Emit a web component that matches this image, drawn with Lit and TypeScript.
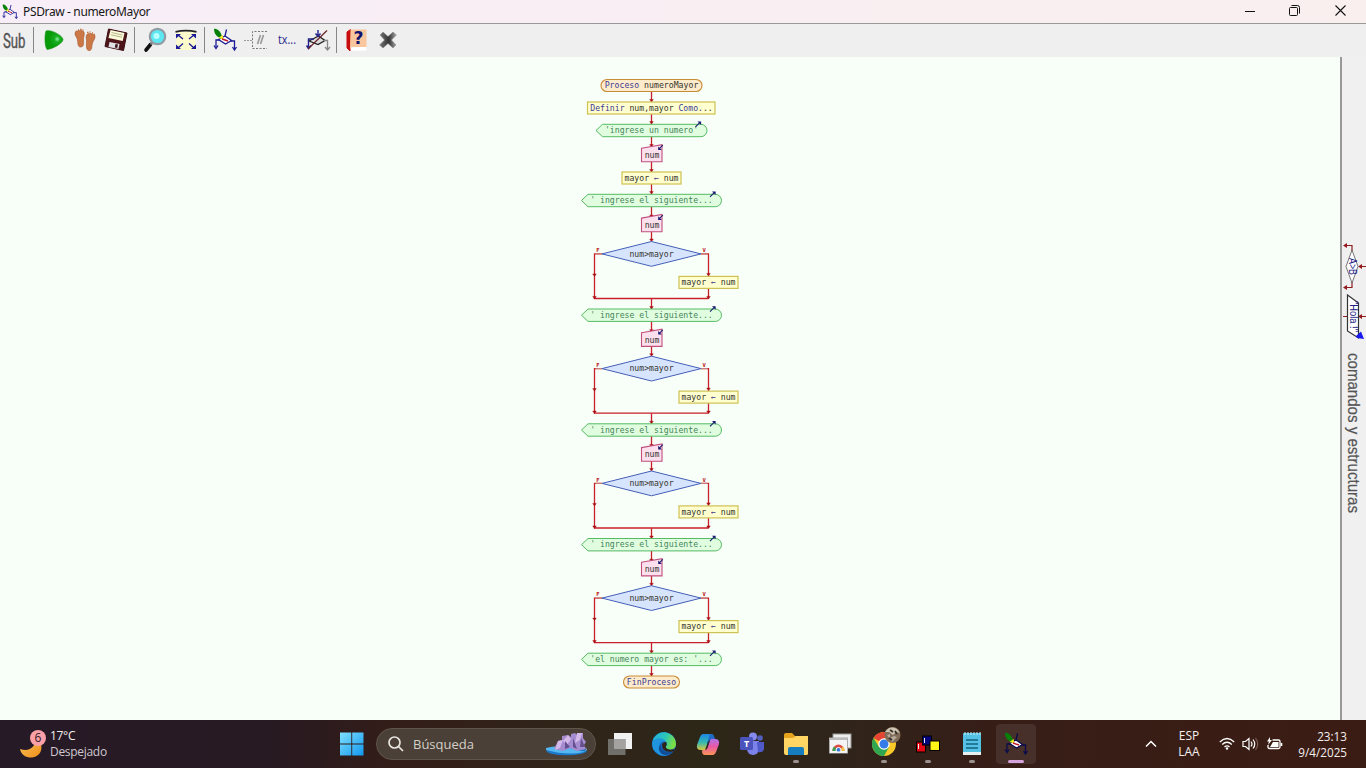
import { LitElement, html, svg, css } from "lit";
import { customElement } from "lit/decorators.js";

const CX = 651.5;

/* ---------- shared glyphs ---------- */

const logo = (size: number, dark = false) => html`<svg width=${size} height=${size} viewBox="0 0 24 24">
  <g fill="none" stroke=${dark ? "#0b0b4c" : "#1c1c96"} stroke-width="1.3">
    <path d="M13.500 1.500L12 8M8 12H3V19.500M17 13H21.500V21"/>
    <path d="M1 17.500L3 20.500L5 17.500M19.500 19L21.500 22L23.500 19"/>
    <path d="M5.500 11.500L12 8L18.500 12.500L12.500 16Z" fill="#fff"/>
  </g>
  <path d="M1 1C4 0 8.500 4 9 9.500C5.500 10.500 1 7 1 1Z" fill="#078007"/>
  <path d="M5.500 10L9.500 7L10.500 11.500Z" fill="#f2ee20"/>
  <path d="M9 11L15 13" stroke="#c2182a" stroke-width="1.400"/>
</svg>`;

/* ---------- flowchart pieces ---------- */

const label = (x: number, y: number, text: string, cls = "") =>
  svg`<text class="t ${cls}" x=${x} y=${y + 2.6} text-anchor="middle" textLength=${text.length * 4.9} lengthAdjust="spacingAndGlyphs" xml:space="preserve">${text}</text>`;

const arrow = (x: number, y1: number, y2: number) => svg`
  <path class="flow" d="M${x} ${y1}V${y2}"/>
  <path class="head" d="M${x - 1.8} ${y2 - 2.5}h3.600l-1.800 2.500z"/>`;

const terminal = (y: number, w: number, word: string, rest = "") => svg`
  <rect class="term" x=${CX - w / 2} y=${y - 6} width=${w} height="12" rx="6"/>
  <text class="t" x=${CX} y=${y + 2.6} text-anchor="middle" textLength=${(word + rest).length * 4.93} lengthAdjust="spacingAndGlyphs"><tspan class="kw">${word}</tspan>${rest}</text>`;

const output = (y: number, w: number, text: string) => {
  const l = CX - w / 2, r = CX + w / 2;
  return svg`
    <path class="out" d="M${l} ${y}L${l + 6.5} ${y - 6.2}H${r - 6.2}A6.200 6.200 0 0 1 ${r - 6.2} ${y + 6.2}H${l + 6.5}Z"/>
    ${label(CX, y, text, "str")}
    <path class="io" d="M${r - 11.5} ${y - 3.6}l4.500 -4.500"/>
    <path class="iohead" d="M${r - 9.5} ${y - 9}h3.600v3.600z"/>`;
};

const input = (y: number) => svg`
  <path class="in" d="M641.500 ${y - 6.8}L662 ${y - 10.4}V${y + 6.8}H641.500Z"/>
  ${label(652, y + 0.4, "num")}
  <path class="io" d="M662.800 ${y - 9.8}l-3.500 3.500"/>
  <path class="iohead" d="M658.200 ${y - 8.6}v3.600h3.600z"/>`;

const assign = (x: number, y: number) => svg`
  <rect class="asg" x=${x - 29.5} y=${y - 6} width="59" height="12"/>
  <text class="t" x=${x} y=${y + 2.6} text-anchor="middle" textLength="54" lengthAdjust="spacingAndGlyphs">mayor <tspan class="kw">←</tspan> num</text>`;

const decision = (y: number) => svg`
  <path class="flow" d="M602 ${y}H594.500V${y + 44.6}H708.500M701 ${y}H708.500V${y + 44.6}"/>
  <path class="pale" d="M595.500 ${y}H603M700 ${y}H707.500"/>
  <path class="cond" d="M602 ${y}L${CX} ${y - 12.4}L701 ${y}L${CX} ${y + 12.4}Z"/>
  ${label(CX, y, "num>mayor")}
  <text class="tf" x="596.300" y=${y - 1.8}>F</text><text class="tf" x="702.500" y=${y - 1.8}>V</text>
  <path class="head" d="M592.700 ${y + 20}h3.600l-1.800 2.500zM592.700 ${y + 42.5}h3.600l-1.800 2.500zM706.700 ${y + 42.5}h3.600l-1.800 2.500zM706.700 ${y + 19.5}h3.600l-1.800 2.500z"/>
  ${assign(708.5, y + 28.5)}`;

const LOOP_TOPS = [200.5, 315.2, 430, 544.7];

const round = (y: number) => svg`
  ${arrow(CX, y + 6, y + 17)}
  ${arrow(CX, y + 31, y + 41)}
  ${arrow(CX, y + 98.2, y + 108.5)}
  ${output(y, 140, "' ingrese el siguiente...")}
  ${input(y + 24.4)}
  ${decision(y + 53.4)}`;

@customElement("flow-chart")
class FlowChart extends LitElement {
  static styles = css`
    :host { display: block; }
    svg { display: block; }
    .t { font: 8px "DejaVu Sans Mono", "Liberation Mono", monospace; fill: #34342c; }
    .kw { fill: #403b94; }
    .str { fill: #458558; }
    .tf { font: bold 5.5px "DejaVu Sans Mono", monospace; fill: #b8141c; }
    .flow { stroke: #c8202a; stroke-width: 1.3; fill: none; }
    .pale { stroke: #c98a80; stroke-width: 1; }
    .head { fill: #a80c14; stroke: #a80c14; stroke-width: .4; }
    .term { fill: #fdebcb; stroke: #c98c38; stroke-width: 1.1; }
    .asg { fill: #ffffcf; stroke: #cfc052; stroke-width: 1.2; }
    .out { fill: #e0fde0; stroke: #55bb62; stroke-width: 1; }
    .in { fill: #fde0ee; stroke: #c0507e; stroke-width: 1.1; }
    .cond { fill: #d7e4fd; stroke: #4560b8; stroke-width: 1; }
    .io { stroke: #161b70; stroke-width: 1.1; }
    .iohead { fill: #161b70; }
  `;
  render() {
    return html`<svg width="1340" height="663" viewBox="0 57 1340 663">
      ${arrow(CX, 92, 102)}${arrow(CX, 114, 124)}${arrow(CX, 137, 147)}${arrow(CX, 162, 172)}${arrow(CX, 184, 194)}${arrow(CX, 665, 676)}
      ${terminal(85.5, 101, "Proceso", " numeroMayor")}
      <rect class="asg" x="587.500" y="102" width="127.500" height="12"/>
      <text class="t" x=${CX} y="110.600" text-anchor="middle" textLength="122.500" lengthAdjust="spacingAndGlyphs"><tspan class="kw">Definir</tspan> num,mayor <tspan class="kw">Como</tspan>...</text>
      ${output(130.5, 111, "'ingrese un numero'")}
      ${input(155)}
      ${assign(CX, 178)}
      ${LOOP_TOPS.map(round)}
      ${output(659.4, 140, "'el numero mayor es: '...")}
      ${terminal(682, 56, "FinProceso")}
    </svg>`;
  }
}

@customElement("tool-bar")
class ToolBar extends LitElement {
  static styles = css`
    :host { display: flex; height: 33px; background: #efefef; align-items: stretch; }
    .b { width: 31px; display: flex; align-items: center; justify-content: center; padding-bottom: 1px; }
    .first { width: 28px; }
    svg { overflow: visible; }
    .sep { width: 1px; margin: 3px 4px 4px 3px; background: #868686; }
    .wide { margin-left: 5px; }
    .tx { font: 12.5px "Open Sans", "Noto Sans", sans-serif; fill: #29298c; }
    .sub { font: 20px "Roboto", sans-serif; fill: #555; stroke: #555; stroke-width: .4; }
    .q { font: bold 18px "DejaVu Sans", sans-serif; fill: #10106e; }
  `;
  render() {
    return html`
      <div class="b first"><svg width="24" height="26" viewBox="0 0 24 26"><text class="sub" x="1" y="20.500" textLength="22.500" lengthAdjust="spacingAndGlyphs">Sub</text></svg></div>
      <div class="sep wide"></div>
      <div class="b"><svg width="24" height="24" viewBox="0 0 24 24">
        <defs><radialGradient id="g" cx=".68" cy=".45" r=".45"><stop offset="0" stop-color="#8df0a0"/><stop offset=".35" stop-color="#16ae20"/><stop offset="1" stop-color="#079a09"/></radialGradient></defs>
        <path d="M4 3C9 1 20.500 7.500 21 11.500C21 15 11 21 5 21.500C2.500 18 2.500 7 4 3Z" fill="url(#g)" stroke="#088d0c" stroke-width=".6"/></svg></div>
      <div class="b"><svg width="24" height="24" viewBox="0 0 24 24" fill="#cb7746" stroke="#a3572d" stroke-width=".6">
        <path d="M2 5C2.500 2.500 9.500 1.500 11 4C12 7 10 10 10.500 13C11 17 10 19 7.500 19C4.500 19 5 15 4.500 12C4 9 1.500 7.500 2 5Z"/>
        <path d="M22 8C21.500 5.500 15 4.500 13.500 7C12.500 10 14 12 13.500 15C13 20 14 23 16.500 22.500C19.500 22 18.500 18 19.500 15C20.500 12 22.500 10.500 22 8Z"/>
        <path d="M2.500 3.500h1.500M5 2h1M7 1.500h1.500M9.500 2h1M14 4.500h1.500M16.500 4h1M19 5h1M21 6.500h1" stroke="#c36e3d" stroke-width="1.500"/></svg></div>
      <div class="b"><svg width="24" height="24" viewBox="0 0 24 24">
        <path d="M4.500 1L23 5L19.500 22.500L1 18.500Z" fill="#4d1519" stroke="#3b0d12"/>
        <path d="M6.500 2L20.500 5L18.700 13L4.500 10Z" fill="#fbfad9"/>
        <path d="M7.500 4.500L18.500 7M7 6.800L18 9.200" stroke="#b8b88c"/>
        <path d="M5.500 14L15.500 16L14.500 21L4.500 19Z" fill="#e0e0e5"/><path d="M11.500 16L14 16.500L13.200 20L10.800 19.500Z" fill="#35161b"/></svg></div>
      <div class="sep"></div>
      <div class="b"><svg width="24" height="24" viewBox="0 0 24 24">
        <path d="M3 22L7.500 16.500" stroke="#111" stroke-width="3.600" stroke-linecap="round"/><path d="M7.500 16.500L10 13.500" stroke="#777" stroke-width="2"/>
        <circle cx="14.500" cy="8.500" r="7.700" fill="#5ce7f2" stroke="#929ba2" stroke-width="2.200"/>
        <circle cx="13.500" cy="8" r="3" fill="#baffff"/></svg></div>
      <div class="b"><svg width="24" height="24" viewBox="0 0 24 24">
        <path d="M2.500 3.500H21.500L22 22H2Z" fill="#fbfacb"/><path d="M1.500 3.800Q12 1.500 22.500 3.800" fill="none" stroke="#222" stroke-width="1.700"/>
        <g stroke="#19199a" stroke-width="1.300" fill="#19199a"><path d="M4 7L9 11M20 7L15 11M4 20L9 15.500M20 20L15 15.500"/><path d="M2 6h5l-5 4.500zM22 6h-5l5 4.500zM2 21h5l-5-4.500zM22 21h-5l5-4.500z" stroke="none"/></g></svg></div>
      <div class="sep"></div>
      <div class="b">${logo(24)}</div>
      <div class="b"><svg width="24" height="24" viewBox="0 0 24 24" fill="none" stroke="#999">
        <path d="M0 12.500H8" stroke-dasharray="2 1"/><path d="M23 3.500H8.500V20.500H23" stroke-dasharray="2 1.500" stroke="#777"/><path d="M16.500 7L13.500 16M19.500 7L16.500 16" stroke-width="1.600"/></svg></div>
      <div class="b"><svg width="24" height="24" viewBox="0 0 24 24"><text class="tx" x="3" y="15.500" textLength="18" lengthAdjust="spacingAndGlyphs">tx...</text></svg></div>
      <div class="b"><svg width="24" height="24" viewBox="0 0 24 24" fill="none">
        <path d="M3 13L12.500 8L19 12.500L12 16.500Z" fill="#ddd" stroke="#222" stroke-width="1.300"/>
        <path d="M12 2V8.500M9.500 5.500L12 8.500L14.500 5.500M8 11H2.500V20M.5 17.500L2.500 20.500L5 17.500" stroke="#22228c" stroke-width="1.400"/>
        <path d="M18 12.500H21.500V21M19 19L21.500 22L24 19" stroke="#888" stroke-width="1.300"/><path d="M2 21L21 2.500" stroke="#6b2228" stroke-width="1.200"/></svg></div>
      <div class="sep"></div>
      <div class="b"><svg width="24" height="24" viewBox="0 0 24 24">
        <path d="M5 20L21.500 17V22.500L5 23Z" fill="#fff"/><path d="M5.500 1.500L2 4V20L5 23Z" fill="#c80d0d" stroke="#c80d0d"/><path d="M5.500 1.500H21.500V19H6.500L5 22Z" fill="#fac69d"/>
        <text class="q" x="8.500" y="15.800" textLength="10" lengthAdjust="spacingAndGlyphs">?</text></svg></div>
      <div class="b"><svg width="24" height="24" viewBox="0 0 24 24">
        <defs><linearGradient id="x"><stop offset="0" stop-color="#777"/><stop offset=".55" stop-color="#333"/><stop offset="1" stop-color="#aaa"/></linearGradient></defs>
        <path d="M4 7L7 4L12 8.500L17 4L20.500 7L15.500 12L20 17L17 20L12 15.500L7 20L3.500 17L8.500 12Z" fill="url(#x)" stroke="#888" stroke-width=".5"/></svg></div>`;
  }
}

@customElement("side-panel")
class SidePanel extends LitElement {
  static styles = css`
    :host { display: block; width: 24px; background: #f0f0f0; border-left: 2px solid #989898; }
    svg { display: block; }
    .cap { font: 16px "Liberation Sans", Arial, sans-serif; fill: #555; stroke: #555; stroke-width: .2; }
    .mini { font: 10.5px "Liberation Sans", Arial, sans-serif; fill: #202085; }
  `;
  render() {
    return html`<svg width="24" height="663" viewBox="1342 57 24 663">
      <g fill="none" stroke="#8e1d22" stroke-width="1.200"><path d="M1352 251V245.500H1345M1352 282V287.500H1345M1366 266.500H1360M1366 316.500H1360M1343 316.500H1347"/></g>
      <path d="M1343 245.500l4-2.500v5zM1343 287.500l4-2.500v5zM1358 266.500l4-2.500v5zM1358 316.500l4-2.500v5z" fill="#951a20"/>
      <path d="M1352 250L1358 266.500L1352 283L1346 266.500Z" fill="#fff" stroke="#666" stroke-width=".9"/>
      <path d="M1347.500 295L1358.500 303V338L1347.500 331Z" fill="#fff" stroke="#333" stroke-width="1.200"/>
      <text class="mini" transform="translate(1348.500 258) rotate(90)" textLength="17" lengthAdjust="spacingAndGlyphs">A&gt;B</text>
      <text class="mini" transform="translate(1349.500 301) rotate(90)" textLength="31" lengthAdjust="spacingAndGlyphs">"Hola !"</text>
      <path d="M1356 336L1361 331.500L1364 339L1357 338Z" fill="#1a1aef"/>
      <text class="cap" transform="translate(1347.700 353) rotate(90)" textLength="160" lengthAdjust="spacingAndGlyphs">comandos y estructuras</text>
    </svg>`;
  }
}

@customElement("task-bar")
class TaskBar extends LitElement {
  static styles = css`
    :host { display: flex; height: 48px; align-items: stretch; color: #f4efee; font: 12px/16px "Open Sans", "Noto Sans", sans-serif;
      background: linear-gradient(90deg, #261a27 0, #281a22 20%, #331d18 29%, #302419 40%, #2d2718 52%, #30241a 62%, #361e17 72%, #3b1c14 100%); }
    svg { display: block; overflow: visible; }
    .weather { width: 331px; display: flex; align-items: center; gap: 5px; box-sizing: border-box; padding-left: 20px; }
    .temp { letter-spacing: -.3px; }
    .desc { color: #cfc8cc; letter-spacing: -.3px; }
    .app { width: 44px; display: flex; flex-direction: column; align-items: center; padding-top: 12px; box-sizing: border-box; }
    .start { width: 41px; }
    .search { width: 220px; height: 32px; margin: 8px 2px 0 4px; border-radius: 16px; box-sizing: border-box; border: 1px solid #5f5549; background: #4a4037; display: flex; align-items: center; padding: 0 7px 0 11px; }
    .q { flex: 1; padding-left: 9px; font-size: 13px; color: #d5cfc8; }
    .dot { width: 6px; height: 3px; border-radius: 2px; background: #9b918d; margin-top: 4px; }
    .current { width: 40px; height: 40px; margin: 4px 2px 0; padding-top: 8px; background: #48302a; border-radius: 4px; }
    .current .dot { width: 16px; background: #d6a3dc; }
    .spring { flex: 1; }
    .tray { display: flex; align-items: center; }
    .lang { width: 40px; margin-left: 12px; text-align: center; }
    .icons { display: flex; gap: 7px; margin-left: 10px; }
    .clock { width: 64px; text-align: right; margin: 0 19px 0 0; font-size: 11.7px; white-space: nowrap; }
    .n { font: 12px "Open Sans", sans-serif; fill: #301b22; }
    .tm { font: bold 9px "Open Sans", sans-serif; fill: #fff; }
  `;
  private app(icon: unknown, open = false, current = false) {
    return html`<div class="app ${current ? "current" : ""}">${icon}${open ? html`<div class="dot"></div>` : ""}</div>`;
  }
  render() {
    const chrome = svg`<circle cx="12" cy="12" r="12" fill="#fbc928"/><path d="M12 12L1.600 6A12 12 0 0 1 22.400 6H12Z" fill="#e54334"/><path d="M1.600 6A12 12 0 0 0 12 24L17 15L12 12L7 15Z" fill="#31a650"/><circle cx="12" cy="12" r="5.700" fill="#fff"/><circle cx="12" cy="12" r="4.500" fill="#367ce8"/>`;
    return html`
      <div class="weather">
        <svg width="25" height="30" viewBox="20 725 25 30">
          <defs><linearGradient id="m" x2="1" y2="1"><stop offset="0" stop-color="#f7c15a"/><stop offset="1" stop-color="#ef8f18"/></linearGradient></defs>
          <path d="M20 742C30 745 35 740 36 732L41 737C43 745 38 750.500 31 750.500C26 750.500 21 748 20 742Z" fill="url(#m)" transform="translate(0 3)"/>
          <circle cx="38" cy="734" r="8" fill="#fca0a8"/><text class="n" x="38" y="738.300" text-anchor="middle">6</text></svg>
        <div><div class="temp">17°C</div><div class="desc">Despejado</div></div>
      </div>
      <div class="app start"><svg width="24" height="24" viewBox="0 0 24 24"><defs><linearGradient id="w" x2="1" y2="1"><stop offset="0" stop-color="#7fe2ff"/><stop offset="1" stop-color="#1196ee"/></linearGradient></defs><path d="M0 .5h11.300v11H0zM12.200 .5h11.300v11H12.200zM0 12.500h11.300v11H0zM12.200 12.500h11.300v11H12.200z" fill="url(#w)"/></svg></div>
      <div class="search">
        <svg width="16" height="16" viewBox="0 0 16 16" fill="none" stroke="#e9e6e1" stroke-width="1.700"><circle cx="6.500" cy="6.500" r="5.500"/><path d="M10.500 10.500L15 15"/></svg>
        <span class="q">Búsqueda</span>
        <svg width="42" height="24" viewBox="0 0 42 24">
          <ellipse cx="20.500" cy="19" rx="20" ry="4.200" fill="#1b79c9"/><path d="M0 16Q14 12 28 17T41 16L38 20Q22 24 0 18Z" fill="#55b7f0"/>
          <path d="M8 17L12 9L16 8V4L22 3L25 5V2L29 1L31 3V1H37V6L40 10L38 13L40 17L31 19L24 16L17 19Z" fill="#a58bcf"/>
          <path d="M12 9L17 8L14 16L9 18ZM22 3L25 7L21 13L17 9ZM31 1H36L34 8L29 11Z" fill="#d3b8ea"/>
          <path d="M19 9L24 15L19 17ZM27 6L31 17L27 15ZM35 6L39 15L34 15Z" fill="#65508f"/></svg>
      </div>
      ${this.app(html`<svg width="24" height="24" viewBox="0 0 24 24"><path d="M6 1h18v16H6z" fill="#f1f1f1"/><path d="M0 7h17.500v16H0z" fill="#777571" opacity=".92"/><path d="M6 7h11.500v10H6z" fill="#a4a2a0"/></svg>`)}
      ${this.app(html`<svg width="24" height="24" viewBox="0 0 24 24"><defs><linearGradient id="e" x2="1" y2=".3"><stop offset="0" stop-color="#21aee4"/><stop offset=".6" stop-color="#2cc8b6"/><stop offset="1" stop-color="#7ade45"/></linearGradient></defs><circle cx="12" cy="12" r="12" fill="#1268bd"/><path d="M.2 10A12 12 0 0 1 24 12C24 19 14 19 14 15C14 13 16 13 14 10C10 5 2 7 .2 10Z" fill="url(#e)"/><path d="M.2 10C3 5 12 5 14 10C9 8 5 14 9 19C11 22 15 23 18 22A12 12 0 0 1 .2 10Z" fill="#2094dc"/><path d="M9 12C8 17 12 22 21 19C18 24 10 24 8 20C6 17 7 14 9 12Z" fill="#124e98"/><path d="M14 10C16 13 13 14 14 16Q17 19 23 17L21.500 19.500Q11 21 10 14Q10 10 14 10Z" fill="#302419"/></svg>`)}
      ${this.app(html`<svg width="24" height="24" viewBox="0 0 24 24"><defs><linearGradient id="c1" x2="0" y2="1"><stop offset="0" stop-color="#1b87e5"/><stop offset=".5" stop-color="#34b9b1"/><stop offset="1" stop-color="#edc633"/></linearGradient><linearGradient id="c2" x2="0" y2="1"><stop offset="0" stop-color="#a675ef"/><stop offset=".5" stop-color="#ea58a5"/><stop offset="1" stop-color="#fb9554"/></linearGradient></defs><path d="M7 2H15Q18 2 18 6L16 7Q13 7 12 11L10 17Q9 20 5 18Q0 18 1 13L4 5Q5 2 7 2Z" fill="url(#c1)"/><path d="M17 23H9Q6 23 6 19L8 18Q11 18 12 14L14 8Q15 5 19 7Q24 7 23 12L20 20Q19 23 17 23Z" fill="url(#c2)"/><path d="M14 2Q18 2 19 7Q16 6 14 8L12 14L11 11Z" fill="#2169c8"/><path d="M12 10L14 8L11 17L9 18Z" fill="#302419"/></svg>`)}
      ${this.app(html`<svg width="24" height="24" viewBox="0 0 24 24"><circle cx="13" cy="4.500" r="4" fill="#858aec"/><circle cx="20" cy="6" r="2.800" fill="#5360bd"/><path d="M7 9H19V17A6 6 0 0 1 7 17Z" fill="#7b83eb"/><path d="M17 10H24V17Q23 21 18 20Z" fill="#5059c9"/><rect x="0" y="5" width="13" height="13" rx="1.500" fill="#4b53bc"/><text class="tm" x="6.500" y="15" text-anchor="middle">T</text></svg>`)}
      ${this.app(html`<svg width="24" height="24" viewBox="0 0 24 24"><path d="M0 3Q0 1 2 1H8L11 4H22Q24 4 24 6V20H0Z" fill="#e6a41c"/><path d="M0 6H9L12 4H24V22Q24 23 22 23H2Q0 23 0 21Z" fill="#ffd663"/><path d="M4 23V17Q4 15 6 15H18Q20 15 20 17V23Z" fill="#167ebe"/></svg>`, true)}
      ${this.app(html`<svg width="24" height="24" viewBox="0 0 24 24"><rect x="5" y="2" width="18" height="14" fill="#eee" stroke="#999"/><rect x="1.500" y="6" width="18" height="15" fill="#f5f5f5" stroke="#aaa"/><path d="M1.500 6h18v2h-18z" fill="#bbb"/><path d="M4.500 19A6 6.500 0 0 1 16.500 19Z" fill="#de4e42"/><path d="M4.500 19A6 6 0 0 1 6 14.500L10 19Z" fill="#36a252"/><path d="M16.500 19A6 6 0 0 0 15 14.500L11 19Z" fill="#f6c343"/><circle cx="10.500" cy="18" r="2.500" fill="#3979dc" stroke="#fff"/><path d="M2 19.500h17v1.500H2z" fill="#eee"/></svg>`)}
      ${this.app(html`<svg width="24" height="24" viewBox="0 0 24 24">${chrome}<circle cx="20.500" cy="3" r="8" fill="#806c58"/><path d="M13 0Q18 -7 25 -3L28 1L24 0L21 3L17 0Z" fill="#cfc5b5"/><path d="M15 3L18 2L18 6L22 4L25 5L20 10Z" fill="#b4aa9d"/><path d="M18 -2L21 0M23 -1L25 2M17 6L20 8" stroke="#342d29" stroke-width="1.800"/></svg>`, true)}
      ${this.app(html`<svg width="24" height="24" viewBox="0 0 24 24" stroke="#000"><rect x=".5" y="10" width="9" height="10" fill="#e30813"/><rect x="6.500" y="4" width="9" height="9" fill="#05057e"/><rect x="14" y="9" width="9.500" height="9.500" fill="#fff516"/><path d="M2.500 12v5M8.500 6v5" stroke="#eee"/></svg>`, true)}
      ${this.app(html`<svg width="24" height="24" viewBox="0 0 24 24"><rect x="3" y="1" width="18" height="22" rx="1" fill="#55c2e5"/><path d="M3 20h18v3H3z" fill="#e8eff1"/><path d="M6 8h12M6 12h12M6 16h12" stroke="#12617f" stroke-width="1.600"/><path d="M5 0v3M8 0v3M11 0v3M14 0v3M17 0v3M20 0v3" stroke="#c7edf8"/></svg>`, true)}
      ${this.app(logo(24, true), true, true)}
      <div class="spring"></div>
      <div class="tray">
        <svg width="12" height="8" viewBox="0 0 12 8" fill="none" stroke="#fff" stroke-width="1.500"><path d="M1 6.500L6 1.500L11 6.500"/></svg>
        <div class="lang">ESP<br>LAA</div>
        <div class="icons">
          <svg width="16" height="16" viewBox="0 0 16 16" fill="none" stroke="#fff" stroke-width="1.300"><path d="M.8 6Q8 -1 15.200 6M3.200 8.500Q8 4 12.800 8.500M5.500 11Q8 8.700 10.500 11"/><circle cx="8" cy="12.500" r="1.200" fill="#fff" stroke="none"/></svg>
          <svg width="17" height="16" viewBox="0 0 17 16" fill="none" stroke="#fff" stroke-width="1.200"><path d="M1 5.500H3.500L7 2.500V13.500L3.500 10.500H1Z"/><path d="M9 5.500Q11 8 9 10.500M11 3.500Q14.500 8 11 12.500"/><path d="M13.500 2Q18 8 13.500 14" stroke="#765e58"/></svg>
          <svg width="17" height="16" viewBox="0 0 17 16" fill="none" stroke="#fff" stroke-width="1.300"><path d="M6.500 4H12.500Q14 4 14 5.500V11Q14 12.500 12.500 12.500H3.500Q2 12.500 2 11V9"/><path d="M7 6h5.500v5H4z" fill="#fff" stroke="none"/><path d="M15.500 7v3" stroke-width="1.600"/><path d="M4 1L1 5.500H3L2 9L6 4H4Z" fill="#fff" stroke="none"/></svg>
        </div>
        <div class="clock">23:13<br>9/4/2025</div>
      </div>`;
  }
}

@customElement("app-root")
class AppRoot extends LitElement {
  static styles = css`
    :host { display: flex; flex-direction: column; width: 1366px; height: 768px; overflow: hidden; }
    .title { height: 23px; display: flex; align-items: center; border-bottom: 1px solid #999; background: linear-gradient(90deg, #f8eef8, #f9eef1 60%, #f9efef); font: 12px "Noto Sans", "Open Sans", sans-serif; color: #161616; padding-left: 2px; }
    .name { flex: 1; padding-left: 5px; letter-spacing: -.36px; }
    .win { width: 45px; display: flex; justify-content: center; padding-bottom: 2px; }
    .last { width: 46px; padding-right: 3px; }
    .main { flex: 1; display: flex; min-height: 0; }
    .canvas { flex: 1; background: #f8fff8; overflow: hidden; }
  `;
  render() {
    return html`
      <div class="title">
        ${logo(16)}<span class="name">PSDraw - numeroMayor</span>
        <div class="win"><svg width="10" height="10" viewBox="0 0 10 10"><path d="M0 5.500H10" stroke="#111"/></svg></div>
        <div class="win"><svg width="11" height="11" viewBox="0 0 11 11" fill="none" stroke="#111"><rect x=".5" y="2.500" width="8" height="8" rx="1"/><path d="M2.500 .5H8.500Q10.500 .5 10.500 2.500V8.500"/></svg></div>
        <div class="win last"><svg width="11" height="11" viewBox="0 0 11 11"><path d="M.5 .5L10.500 10.500M10.500 .5L.5 10.500" stroke="#111" stroke-width="1.100"/></svg></div>
      </div>
      <tool-bar></tool-bar>
      <div class="main"><div class="canvas"><flow-chart></flow-chart></div><side-panel></side-panel></div>
      <task-bar></task-bar>`;
  }
}
